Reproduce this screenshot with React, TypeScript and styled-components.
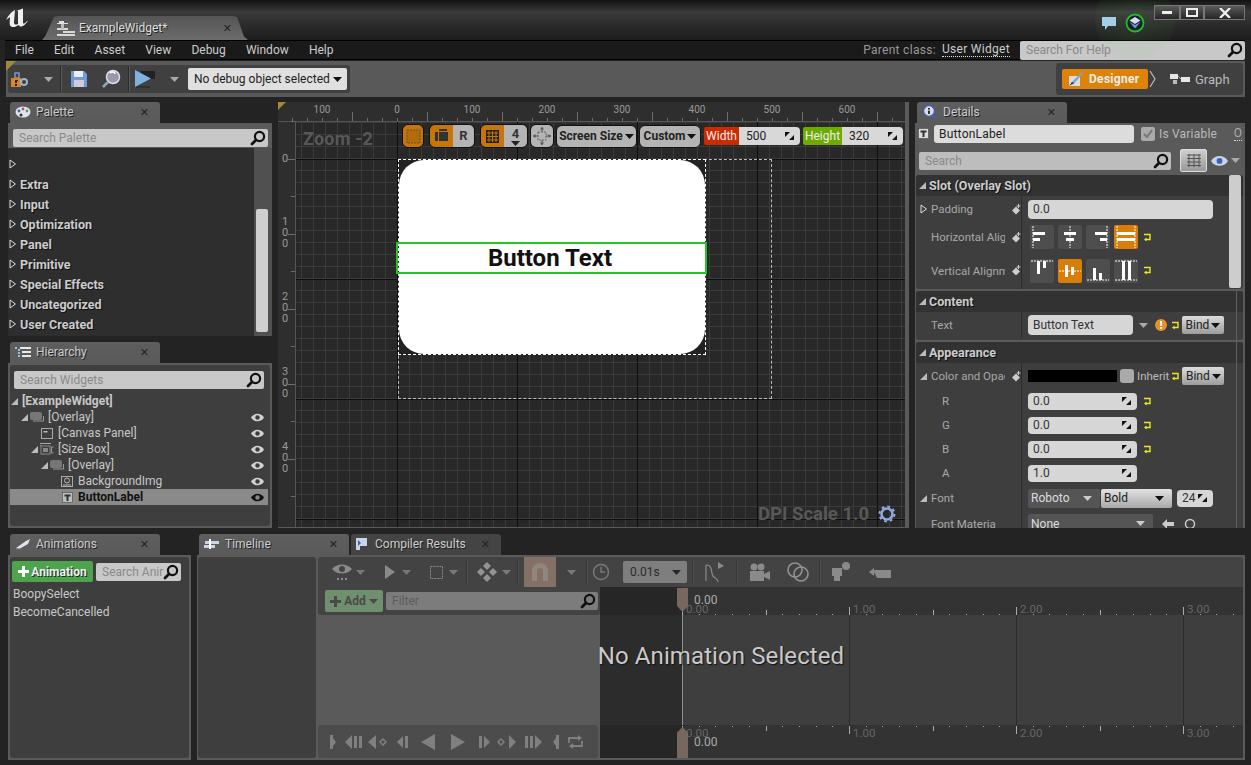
import { ReactNode } from 'react';
import styled, { createGlobalStyle } from 'styled-components';

const GlobalStyle = createGlobalStyle`
  html, body { margin: 0; padding: 0; background: #1e1e1e; }
  * { box-sizing: border-box; }
  body { font-family: Roboto, "Liberation Sans", sans-serif; }
`;

const PALETTE_ROWS = ['', 'Extra', 'Input', 'Optimization', 'Panel', 'Primitive', 'Special Effects', 'Uncategorized', 'User Created'];
const MENU_ITEMS = ['File', 'Edit', 'Asset', 'View', 'Debug', 'Window', 'Help'];
const TREE = [
  { label: '[ExampleWidget]', depth: 0, arrow: true, root: true },
  { label: '[Overlay]', depth: 1, arrow: true, icon: 'overlay' },
  { label: '[Canvas Panel]', depth: 2, icon: 'canvas' },
  { label: '[Size Box]', depth: 2, arrow: true, sizeBox: true, icon: 'size' },
  { label: '[Overlay]', depth: 3, arrow: true, icon: 'overlay' },
  { label: 'BackgroundImg', depth: 4, icon: 'image' },
  { label: 'ButtonLabel', depth: 4, icon: 'text', selected: true },
];

/* ---------- shell ---------- */

const Window = styled.div`
  width: 1251px;
  height: 765px;
  display: flex;
  flex-direction: column;
  overflow: hidden;
  background: #232323;
  color: #ccc;
  font-size: 12px;
`;

const TitleBar = styled.div`
  position: relative;
  flex: 0 0 40px;
  display: flex;
  align-items: flex-end;
  padding-left: 42px;
  background: linear-gradient(#121212 0, #1e1e1e 8%, #3a3a3a 30%, #2c2c2c 60%, #1d1d1d 100%);
`;

const Glow = styled.div`
  position: absolute;
  left: 1095px;
  top: -20px;
  width: 80px;
  height: 80px;
  border-radius: 50%;
  background: radial-gradient(rgba(90, 200, 90, 0.1), rgba(90, 200, 90, 0.04) 70%, transparent 72%);
`;

const LogoSlot = styled.div`
  position: absolute;
  left: 5px;
  top: 8px;
`;

const DocTab = styled.div`
  width: 206px;
  height: 24px;
  display: flex;
  align-items: center;
  gap: 4px;
  padding: 0 16px 0 15px;
  background: linear-gradient(#555, #6c6c6c);
  clip-path: polygon(0 100%, 3px 85%, 12px 4%, 16px 0, 190px 0, 195px 4%, 202px 85%, 100% 100%);
  color: #ddd;
  text-shadow: 1px 1px 0 #222;
`;

const DocTabTitle = styled.span`
  flex: 1;
  font-size: 12px;
`;

const CloseX = styled.span`
  font-size: 11px;
  line-height: 1;
  color: #222;
  text-shadow: none;
  font-family: "DejaVu Sans", sans-serif;
`;

const TrayIcons = styled.div`
  position: absolute;
  left: 1101px;
  top: 13px;
  display: flex;
  align-items: center;
  gap: 8px;
`;

const WindowButtons = styled.div`
  position: absolute;
  left: 1154px;
  top: 5px;
  display: flex;
`;

const WindowButton = styled.div<{ $w: number }>`
  width: ${({ $w }) => $w}px;
  height: 15px;
  display: flex;
  align-items: center;
  justify-content: center;
  border: 1px solid #777;
  background: linear-gradient(#5a5a5a, #262626);
`;

const MenuBar = styled.div`
  flex: 0 0 20px;
  min-height: 0;
  margin: 0 6px 0 5px;
  display: flex;
  align-items: center;
  background: #1a1a1a;
  border-top: 1px solid #000;
  border-bottom: 1px solid #000;
  padding-left: 10px;
`;

const MenuItem = styled.span`
  font-size: 12px;
  color: #ccc;
  margin-right: 20.2px;
`;

const ParentLabel = styled.span`
  margin-left: auto;
  color: #999;
  font-size: 12px;
  letter-spacing: 0.3px;
`;

const ParentLink = styled.span`
  margin: 0 10px 0 6px;
  color: #ccc;
  font-size: 12px;
  letter-spacing: 0.3px;
  border-bottom: 1px dotted #ddd;
  line-height: 13px;
`;

const SearchBox = styled.div<{ $w?: number; $h?: number; $shade?: string }>`
  display: flex;
  align-items: center;
  justify-content: space-between;
  flex: ${({ $w }) => ($w ? `0 0 ${$w}px` : '1')};
  height: ${({ $h }) => $h ?? 18}px;
  padding: 0 2px 0 6px;
  border-radius: 2px;
  background: ${({ $shade }) => $shade ?? '#c8c8c8'};
  color: #8a8a8a;
  font-size: 12px;
  overflow: hidden;
  white-space: nowrap;
`;

const ToolBar = styled.div`
  flex: 0 0 36px;
  margin: 1px 6px 0 6px;
  position: relative;
  display: flex;
  align-items: center;
  justify-content: space-between;
  padding: 0 2px;
  background: #595959;
`;

const CornerMark = styled.div`
  position: absolute;
  left: 0;
  top: 0;
  width: 0;
  height: 0;
  border-top: 10px solid #a08a3a;
  border-right: 10px solid transparent;
`;

const ToolPill = styled.div`
  width: 342px;
  height: 28px;
  display: flex;
  align-items: center;
  background: #404040;
  border-radius: 3px;
`;

const Slot = styled.div<{ $w: number }>`
  flex: 0 0 ${({ $w }) => $w}px;
  display: flex;
  align-items: center;
  justify-content: center;
`;

const Sep = styled.div`
  width: 2px;
  height: 26px;
  background: #2c2c2c;
  border-right: 1px solid #5a5a5a;
`;

const DebugCombo = styled.div`
  width: 159px;
  height: 22px;
  display: flex;
  align-items: center;
  gap: 3px;
  padding-left: 6px;
  border-radius: 2px;
  background: #e0e0e0;
  color: #222;
  font-size: 12px;
  white-space: nowrap;
`;

const ModePill = styled.div`
  width: 187px;
  height: 32px;
  display: flex;
  align-items: center;
  padding: 0 6px;
  background: #404040;
  border-radius: 3px;
`;

const DesignerButton = styled.div`
  width: 86px;
  height: 20px;
  display: flex;
  align-items: center;
  gap: 5px;
  padding-left: 6px;
  border-radius: 2px;
  background: #de8308;
  color: #eee;
  font-weight: 700;
  font-size: 12px;
  letter-spacing: 0.3px;
`;

const GraphLabel = styled.span`
  margin-left: 5px;
  font-size: 13px;
  color: #bbb;
`;

/* ---------- docked panels ---------- */

const MainArea = styled.div`
  flex: 0 0 426px;
  min-height: 0;
  margin: 5px 6px 0 8px;
  display: grid;
  grid-template-columns: 264px 631px 330px;
  grid-template-rows: minmax(0, 1fr);
  column-gap: 6px;
`;

const Stack = styled.div`
  display: flex;
  flex-direction: column;
  gap: 6px;
  min-height: 0;
`;

const Dock = styled.div<{ $h?: number }>`
  display: flex;
  flex-direction: column;
  flex: ${({ $h }) => ($h ? `0 0 ${$h}px` : '1')};
  min-height: 0;
  min-width: 0;
`;

const TabStrip = styled.div`
  flex: 0 0 21px;
  display: flex;
  gap: 2px;
  padding-left: 2px;
`;

const PanelTab = styled.div<{ $dim?: boolean }>`
  width: 150px;
  display: flex;
  align-items: center;
  gap: 5px;
  padding: 0 11px 1px 5px;
  border-radius: 3px 3px 0 0;
  background: ${({ $dim }) => ($dim ? '#444' : 'linear-gradient(#5e5e5e, #5a5a5a)')};
  color: #ccc;
  font-size: 12px;
  text-shadow: 1px 1px 0 #222;
`;

const TabTitle = styled.span`
  flex: 1;
  white-space: nowrap;
`;

const PanelBody = styled.div<{ $pad?: string }>`
  position: relative;
  flex: 1;
  min-height: 0;
  display: flex;
  flex-direction: column;
  background: #5a5a5a;
  padding: ${({ $pad }) => $pad ?? '3px'};
  overflow: hidden;
`;

const PaletteSearch = styled.div`
  display: flex;
  padding: 5px 3px 1px 1px;
  flex: 0 0 24px;
`;

const PaletteList = styled.div`
  flex: 1;
  display: flex;
  min-height: 0;
  background: #2e2e2e;
  margin: 0 -1px -1px -1px;
`;

const PaletteRows = styled.div`
  flex: 1;
  padding-top: 6px;
`;

const PaletteRow = styled.div`
  height: 20px;
  display: flex;
  align-items: center;
  gap: 3px;
  padding-left: 1px;
  font-size: 12.5px;
  font-weight: 700;
  color: #ccc;
  text-shadow: 1px 1px 0 #111;
`;

const PaletteScroll = styled.div`
  flex: 0 0 18px;
  display: flex;
  flex-direction: column;
  justify-content: flex-end;
  padding: 0 4px 4px 2px;
  background: #505050;
`;

const ScrollThumb = styled.div<{ $h: number }>`
  height: ${({ $h }) => $h}px;
  background: #cfcfcf;
  border-radius: 2px;
`;

const DarkPanel = styled.div`
  flex: 1;
  min-height: 0;
  display: flex;
  flex-direction: column;
  background: #3e3e3e;
  border-radius: 3px;
  padding: 3px 2px 0 0;
`;

const TreeSearch = styled.div`
  display: flex;
  padding: 3px 4px 4px 4px;
`;

const TreeRow = styled.div<{ $selected?: boolean }>`
  height: 16px;
  display: flex;
  align-items: center;
  padding-right: 4px;
  background: ${({ $selected }) => ($selected ? '#8a8a8a' : 'transparent')};
  color: ${({ $selected }) => ($selected ? '#111' : '#c8c8c8')};
  font-weight: ${({ $selected }) => ($selected ? 700 : 400)};
  font-size: 12px;
`;

const TreeIndent = styled.div<{ $depth: number }>`
  flex: 0 0 ${({ $depth }) => $depth * 10}px;
`;

const TreeArrowSlot = styled.div`
  flex: 0 0 9px;
  display: flex;
  justify-content: center;
`;

const TreeIconSlot = styled.div`
  flex: 0 0 16px;
  display: flex;
  justify-content: center;
  margin-right: 3px;
`;

const TreeLabel = styled.span<{ $root?: boolean }>`
  flex: 1;
  white-space: nowrap;
  margin-left: ${({ $root }) => ($root ? 3 : 0)}px;
  font-weight: ${({ $root }) => ($root ? 700 : 'inherit')};
`;

/* ---------- designer canvas ---------- */

const CanvasBody = styled.div`
  position: relative;
  flex: 1;
  display: grid;
  grid-template-columns: 18px 1fr;
  grid-template-rows: 20px minmax(0, 1fr);
  background: #2e2e2e;
  border-right: 4px solid #5a5a5a;
  border-bottom: 1px solid #5a5a5a;
  overflow: hidden;
`;

const CanvasCorner = styled.div`
  position: absolute;
  left: 0;
  top: 0;
  width: 0;
  height: 0;
  border-top: 8px solid #a08a3a;
  border-right: 8px solid transparent;
  z-index: 3;
`;

const RulerTop = styled.div`
  grid-column: 1 / 3;
  position: relative;
  border-bottom: 1px solid #555;
  font-size: 10px;
  color: #999;
`;

const RulerLeft = styled.div`
  position: relative;
  border-right: 1px solid #555;
  color: #999;
  font-size: 11px;
`;

const RulerLabel = styled.span`
  position: absolute;
  top: 2px;
  transform: translateX(-50%);
`;

const RulerDigits = styled.span`
  position: absolute;
  left: 3px;
  width: 8px;
  display: flex;
  flex-direction: column;
  align-items: center;
  line-height: 11px;
`;

const Tick = styled.i<{ $len: number; $axis: 'x' | 'y'; $tone?: string }>`
  position: absolute;
  background: ${({ $tone }) => $tone ?? '#6e6e6e'};
  ${({ $axis, $len }) =>
    $axis === 'x'
      ? `bottom: 0; width: 1px; height: ${$len}px;`
      : `right: 0; height: 1px; width: ${$len}px;`}
`;

const Stage = styled.div`
  position: relative;
  overflow: hidden;
  background-color: #282828;
  background-image:
    linear-gradient(to right, #0e0e0e 1px, transparent 1px),
    linear-gradient(to bottom, #0e0e0e 1px, transparent 1px),
    linear-gradient(to right, #3b3b3b 1px, transparent 1px),
    linear-gradient(to bottom, #3b3b3b 1px, transparent 1px);
  background-size: 120px 120px, 120px 120px, 12px 12px, 12px 12px;
  background-position: 101px 0, 0 37px, 5px 0, 0 0;
`;

const ZoomCaption = styled.div`
  position: absolute;
  left: 7px;
  top: 6px;
  font-size: 18px;
  font-weight: 700;
  color: #585858;
  letter-spacing: 0.2px;
`;

const DpiCaption = styled.div`
  position: absolute;
  right: 9px;
  bottom: 2px;
  display: flex;
  align-items: center;
  gap: 9px;
  font-size: 18.5px;
  font-weight: 700;
  color: #585858;
`;

const DesignBounds = styled.div`
  position: absolute;
  left: 102px;
  top: 37px;
  width: 374px;
  height: 240px;
  border: 1px dashed #bdbdbd;
`;

const WidgetOutline = styled.div`
  position: absolute;
  left: 102px;
  top: 37px;
  width: 308px;
  height: 196px;
  border: 1.5px dashed #fff;
  background: #222;
`;

const WidgetFill = styled.div`
  width: 100%;
  height: 100%;
  background: #fff;
  border-radius: 25px;
`;

const LabelBox = styled.div`
  position: absolute;
  left: 100px;
  top: 120px;
  width: 311px;
  height: 32px;
  display: flex;
  align-items: center;
  justify-content: center;
  padding-right: 3px;
  border: 2px solid #22c822;
  color: #111;
  font-size: 24px;
  font-weight: 700;
`;

const CanvasTools = styled.div`
  position: absolute;
  left: 106px;
  top: 2px;
  display: flex;
  align-items: center;
  gap: 2px;
`;

const ToolGroup = styled.div<{ $gapRight?: number }>`
  height: 24px;
  display: flex;
  margin-right: ${({ $gapRight }) => $gapRight ?? 0}px;
  border: 1px solid #111;
  border-radius: 6px;
  overflow: hidden;
`;

const ToolCell = styled.div<{ $w: number; $on?: boolean }>`
  width: ${({ $w }) => $w}px;
  display: flex;
  flex-direction: column;
  align-items: center;
  justify-content: center;
  background: ${({ $on }) => ($on ? '#c67508' : '#b4b4b4')};
  color: #333;
  font-weight: 700;
  font-size: 13px;
  line-height: 14px;
`;

const ToolCombo = styled.div<{ $w: number }>`
  width: ${({ $w }) => $w}px;
  height: 23px;
  display: flex;
  align-items: center;
  justify-content: center;
  gap: 2px;
  border: 1px solid #111;
  border-radius: 6px;
  background: #b4b4b4;
  color: #222;
  font-weight: 700;
  font-size: 12px;
  white-space: nowrap;
`;

const SizeField = styled.div`
  height: 18px;
  display: flex;
  margin-left: 1px;
`;

const SizeTag = styled.div<{ $tone: string; $w: number }>`
  width: ${({ $w }) => $w}px;
  display: flex;
  align-items: center;
  justify-content: center;
  background: ${({ $tone }) => $tone};
  border-radius: 2px 0 0 2px;
  color: #eee;
  font-size: 12px;
`;

const SizeValue = styled.div<{ $w: number }>`
  width: ${({ $w }) => $w}px;
  display: flex;
  align-items: center;
  justify-content: space-between;
  padding: 0 5px 0 7px;
  background: #d8d8d8;
  border-radius: 0 4px 4px 0;
  color: #222;
  font-size: 12px;
`;

/* ---------- details ---------- */

const NameRow = styled.div`
  flex: 0 0 24px;
  display: flex;
  align-items: center;
  padding: 0 3px 3px 3px;
`;

const NameField = styled.div`
  width: 200px;
  height: 18px;
  margin-left: 5px;
  display: flex;
  align-items: center;
  padding-left: 5px;
  background: #dcdcdc;
  border-radius: 3px;
  color: #222;
  font-size: 12px;
  letter-spacing: 0.2px;
`;

const VarCheck = styled.div`
  width: 14px;
  height: 14px;
  margin-left: 7px;
  display: flex;
  align-items: center;
  justify-content: center;
  background: #aaa;
  border-radius: 2px;
`;

const VarLabel = styled.span`
  margin-left: 4px;
  color: #bbb;
  font-size: 12px;
  letter-spacing: 0.2px;
  white-space: nowrap;
`;

const DottedO = styled.span`
  margin-left: auto;
  color: #aaa;
  font-size: 12px;
  line-height: 13px;
  border-bottom: 1px dotted #ddd;
`;

const DetailsSearchRow = styled.div`
  flex: 0 0 28px;
  display: flex;
  align-items: center;
  padding: 0 0 1px 4px;
`;

const ViewToggle = styled.div`
  width: 27px;
  height: 23px;
  margin-left: 9px;
  display: flex;
  align-items: center;
  justify-content: center;
  background: linear-gradient(#cfcfcf, #999);
  border: 1px solid #ddd;
  border-radius: 2px;
`;

const DetailsScroll = styled.div`
  position: relative;
  flex: 1;
  min-height: 0;
  overflow: hidden;
  padding-left: 1px;
  margin-right: 2px;
`;

const DetailsTrack = styled.div`
  position: absolute;
  right: 6px;
  top: 116px;
  bottom: 0;
  width: 1px;
  background: #5f5f5f;
`;

const DetailsThumb = styled.div`
  position: absolute;
  right: 2px;
  top: 0;
  width: 12px;
  height: 113px;
  background: #cdcdcd;
  border-radius: 2px;
`;

const Category = styled.div`
  margin-bottom: 2px;
  background: #3e3e3e;
  border-radius: 3px;
`;

const CategoryHead = styled.div`
  height: 21px;
  display: flex;
  align-items: center;
  gap: 2px;
  padding-left: 2px;
  background: #323232;
  border-radius: 3px 3px 0 0;
  font-weight: 700;
  font-size: 12.5px;
  color: #ccc;
  text-shadow: 1px 1px 0 #111;
`;

const PropRow = styled.div<{ $h: number; $lift?: number }>`
  height: ${({ $h }) => $h}px;
  padding-bottom: ${({ $lift }) => $lift ?? 0}px;
  display: grid;
  grid-template-columns: 106px 1fr;
`;

const PropName = styled.div`
  display: flex;
  align-items: center;
  border-right: 1px solid #2c2c2c;
  color: #a8a8a8;
  font-size: 11.5px;
`;

const PropArrow = styled.div`
  flex: 0 0 15px;
  display: flex;
  justify-content: center;
`;

const PropText = styled.span<{ $indent?: number }>`
  flex: 0 0 74px;
  padding-left: ${({ $indent }) => $indent ?? 0}px;
  overflow: hidden;
  white-space: nowrap;
`;

const OverrideSlot = styled.div`
  margin-left: 6px;
`;

const PropValue = styled.div`
  display: flex;
  align-items: center;
  padding-left: 6px;
`;

const ValueField = styled.div<{ $w: number; $h?: number }>`
  width: ${({ $w }) => $w}px;
  height: ${({ $h }) => $h ?? 18}px;
  display: flex;
  align-items: center;
  justify-content: space-between;
  padding: 0 5px;
  background: #d6d6d6;
  border-radius: 4px;
  color: #333;
  font-size: 12px;
`;

const AlignRow = styled.div`
  display: flex;
  gap: 4px;
  margin: 0 5px 0 2px;
`;

const AlignCell = styled.div<{ $on?: boolean }>`
  width: 24px;
  height: 24px;
  background: ${({ $on }) => ($on ? '#d77d08' : '#4e4e4e')};
  border-radius: 2px;
  display: flex;
`;

const BindButton = styled.div`
  width: 42px;
  height: 18px;
  margin-left: 2px;
  display: flex;
  align-items: center;
  justify-content: center;
  gap: 2px;
  background: linear-gradient(#dcdcdc, #9c9c9c);
  border-radius: 2px;
  color: #222;
  font-size: 12px;
`;

const Swatch = styled.div<{ $tone: string; $w: number; $h: number }>`
  width: ${({ $w }) => $w}px;
  height: ${({ $h }) => $h}px;
  margin-right: 3px;
  background: ${({ $tone }) => $tone};
  border-radius: ${({ $w }) => ($w < 20 ? 3 : 0)}px;
`;

const InheritText = styled.span`
  flex: 0 0 32px;
  color: #bbb;
  font-size: 11.5px;
`;

const FontDrop = styled.div<{ $w: number; $light?: boolean }>`
  width: ${({ $w }) => $w}px;
  height: 19px;
  display: flex;
  align-items: center;
  justify-content: space-between;
  padding: 0 8px 0 3px;
  margin-right: 1px;
  background: ${({ $light }) => ($light ? 'linear-gradient(#e2e2e2, #a8a8a8)' : '#555')};
  border-radius: 2px;
  color: ${({ $light }) => ($light ? '#222' : '#ddd')};
  font-size: 12px;
`;

/* ---------- bottom ---------- */

const BottomArea = styled.div`
  flex: 0 0 226px;
  margin: 6px 6px 5px 8px;
  display: grid;
  grid-template-columns: 183px 1048px;
  grid-template-rows: minmax(0, 1fr);
  column-gap: 6px;
  min-height: 0;
`;

const AnimationsTop = styled.div`
  display: flex;
  align-items: center;
  gap: 3px;
  margin-top: 1px;
  padding: 0 6px 0 2px;
  height: 21px;
`;

const AddAnimation = styled.div`
  flex: 0 0 81px;
  height: 21px;
  display: flex;
  align-items: center;
  justify-content: center;
  gap: 2px;
  background: #4ca44c;
  border-radius: 2px;
  color: #eee;
  font-weight: 700;
  font-size: 12px;
  text-shadow: 1px 1px 0 #222;
`;

const AnimationRows = styled.div`
  padding: 3px 0 0 3px;
`;

const AnimationRow = styled.div`
  height: 18px;
  display: flex;
  align-items: center;
  color: #c8c8c8;
  font-size: 12px;
`;

const TimelineBody = styled.div`
  position: relative;
  flex: 1;
  min-height: 0;
  display: grid;
  grid-template-columns: 118px 1fr;
  column-gap: 2px;
  background: #5a5a5a;
  padding: 2px 2px 2px 1px;
`;

const LeftStub = styled.div`
  background: #3e3e3e;
  border-radius: 3px;
`;

const TimelineGrid = styled.div`
  display: grid;
  grid-template-columns: 282px 1fr;
  grid-template-rows: 30px 28px 110px 1fr;
  min-height: 0;
`;

const TimelineTools = styled.div`
  grid-column: 1 / 3;
  display: flex;
  align-items: center;
  padding-left: 12px;
  background: #434343;
  border-radius: 3px 3px 0 0;
  > * { opacity: 0.52; }
`;

const SnapBox = styled.div`
  width: 32px;
  height: 30px;
  display: flex;
  align-items: center;
  justify-content: center;
  background: #c29a84;
`;

const StepCombo = styled.div`
  width: 64px;
  height: 22px;
  display: flex;
  align-items: center;
  justify-content: space-between;
  padding: 0 6px 0 7px;
  background: #b4b4b4;
  border-radius: 2px;
  color: #111;
  font-size: 12px;
`;

const OutlinerHead = styled.div`
  display: flex;
  align-items: center;
  gap: 3px;
  padding: 0 2px 0 7px;
  background: #434343;
  border-radius: 0 0 3px 3px;
`;

const AddTrack = styled.div`
  flex: 0 0 58px;
  height: 22px;
  display: flex;
  align-items: center;
  justify-content: center;
  gap: 3px;
  background: #6f8f6f;
  border-radius: 2px;
  color: #4a4a4a;
  font-weight: 700;
  font-size: 12px;
`;

const FilterHint = styled.span`
  color: #5c5c5c;
`;

const OutlinerGap = styled.div``;

const Transport = styled.div`
  display: flex;
  align-items: center;
  padding-left: 2px;
  margin-right: 2px;
  background: #4c4c4c;
  border-radius: 3px;
`;

const TransportItem = styled.div<{ $gap: number }>`
  margin-left: ${({ $gap }) => $gap}px;
`;

const Track = styled.div<{ $band: string; $shade: string }>`
  position: relative;
  overflow: hidden;
  background: linear-gradient(to right, ${({ $shade }) => $shade} 82px, ${({ $band }) => $band} 82px);
`;

const TrackTime = styled.span<{ $top?: number; $bottom?: number; $bright?: boolean; $size?: number }>`
  position: absolute;
  ${({ $top }) => ($top !== undefined ? `top: ${$top}px;` : '')}
  ${({ $bottom }) => ($bottom !== undefined ? `bottom: ${$bottom}px;` : '')}
  color: ${({ $bright }) => ($bright ? '#aaa' : '#666')};
  font-size: ${({ $size }) => $size ?? 11.5}px;
`;

const PlayheadCap = styled.div<{ $tip: 'up' | 'down'; $h: number }>`
  position: absolute;
  left: 77px;
  width: 11px;
  height: ${({ $h }) => $h}px;
  top: ${({ $tip }) => ($tip === 'down' ? '1px' : '2px')};
  background: #77675e;
  clip-path: ${({ $tip }) =>
    $tip === 'down'
      ? 'polygon(0 0, 100% 0, 100% 75%, 50% 100%, 0 75%)'
      : 'polygon(50% 0, 100% 18%, 100% 100%, 0 100%, 0 18%)'};
`;

const PlayheadLine = styled.div`
  position: absolute;
  left: 82px;
  top: 0;
  bottom: 0;
  width: 1px;
  background: #8f8f8f;
`;

const NoSelection = styled.div`
  position: absolute;
  inset: 0 0 3px 0;
  display: flex;
  align-items: center;
  justify-content: center;
  font-size: 24px;
  letter-spacing: 0.1px;
  color: #c9c9c9;
  text-shadow: 1px 1px 1px #111;
  pointer-events: none;
`;

/* ---------- drawings ---------- */

const Icon = ({ w, h = w, box, children }: { w: number; h?: number; box?: string; children: ReactNode }) => (
  <svg width={w} height={h} viewBox={box ?? `0 0 ${w} ${h}`} style={{ display: 'block', flex: 'none' }}>
    {children}
  </svg>
);

const Caret = ({ tone = '#aaa' }: { tone?: string }) => (
  <Icon w={9} h={5}>
    <path d="M0 0h9L4.5 5z" fill={tone} />
  </Icon>
);

const OutlineArrow = () => (
  <Icon w={8} h={10}>
    <path d="M1 1l5.5 4L1 9z" fill="none" stroke="#ddd" strokeWidth="1" />
  </Icon>
);

const SolidArrow = ({ tone = '#bbb' }: { tone?: string }) => (
  <Icon w={9} h={9}>
    <path d="M8 1v7H1z" fill={tone} />
  </Icon>
);

const Magnifier = () => (
  <Icon w={16}>
    <circle cx="9.5" cy="6.5" r="4.6" fill="none" stroke="#111" strokeWidth="2.2" />
    <path d="M6 10L2 14" stroke="#111" strokeWidth="2.8" strokeLinecap="round" />
  </Icon>
);

const Spinner = () => (
  <Icon w={11} h={10}>
    <path d="M1 1h5L1 6zM10 9H5l5-5z" fill="#111" />
  </Icon>
);

const ResetArrow = () => (
  <Icon w={9} h={9}>
    <path d="M1 1.5h6v5H2.5" fill="none" stroke="#eaea20" strokeWidth="1.4" />
    <path d="M3.5 4.5v4L1 6.5z" fill="#eaea20" />
  </Icon>
);

const Override = () => (
  <OverrideSlot>
    <Icon w={11} h={11}>
      <path d="M5 2.5L9 6.5 5 10.500 1 6.500z" fill="#ccc" />
      <path d="M7.500 0v4M5.500 2h4" stroke="#ccc" strokeWidth="1" />
    </Icon>
  </OverrideSlot>
);

const Eye = ({ tone = '#d2d2d2', pupil = '#3e3e3e', w = 13 }: { tone?: string; pupil?: string; w?: number }) => (
  <Icon w={w} h={(w * 9) / 13} box="0 0 13 9">
    <path d="M0 4.500C3 -0.500 10 -0.500 13 4.500 10 9.500 3 9.500 0 4.500z" fill={tone} />
    <circle cx="6.500" cy="4.500" r="2.200" fill={pupil} />
  </Icon>
);

const UeLogo = () => (
  <Icon w={24} h={20}>
    <path
      d="M1 12C3 8 6 4 10 2L9 14C9 17 11 17 13 16L13 4C13 3 12 2.500 11 3L18 .5 18 14C18 16 19 16 21 14L23 12.500C21 16 18 19 15 18.500L13.500 17C11 19 7 20 5.500 18 4 16 5 12 5 9 4 10 2 11 1 12z"
      fill="#efefef"
    />
  </Icon>
);

const BlueprintIcon = () => (
  <Icon w={18} h={16}>
    <path d="M2 1h5v3H2zM0 3h11v1H0z" fill="#e2e2e2" />
    <path d="M0 8h11v2H0zM6 11h12v2H6zM0 14h18v2H0z" fill="#d8d8d8" />
    <path d="M4 4h3v5H4z" fill="#bbb" />
  </Icon>
);

const PaletteIcon = () => (
  <Icon w={16} h={12}>
    <ellipse cx="8" cy="6" rx="7.500" ry="5.500" fill="#dfe4ec" />
    <circle cx="4" cy="5" r="1.400" fill="#3a62b8" />
    <circle cx="8" cy="3" r="1.400" fill="#d04a3a" />
    <circle cx="12" cy="5" r="1.400" fill="#4aa84a" />
    <circle cx="6" cy="9" r="1.500" fill="#333" />
  </Icon>
);

const HierarchyIcon = () => (
  <Icon w={16} h={13}>
    <path d="M0 1h2v2H0zM3 3h2v2H3zM3 6h2v2H3zM3 9h2v2H3z" fill="#8fc0e8" />
    <path d="M5 1h11v2H5zM7 5h9v2H7zM7 9h9v2H7z" fill="#e8e8e8" />
  </Icon>
);

const DetailsIcon = () => (
  <Icon w={16} h={16}>
    <circle cx="7" cy="7" r="5.500" fill="#ddd" stroke="#3a62b8" strokeWidth="1.500" />
    <path d="M6 4h2v1.500H6zM6 6.500h2V10H6z" fill="#333" />
    <path d="M11 11l4 4" stroke="#3a62b8" strokeWidth="1.500" />
  </Icon>
);

const TextBadge = ({ fill = '#dcdcdc' }: { fill?: string }) => (
  <Icon w={11} h={11}>
    <rect x=".5" y=".5" width="10" height="10" fill={fill} stroke="#333" strokeWidth="0.500" />
    <path d="M2.500 2.500h6v2H6.500v4.500h-2V4.500H2.500z" fill="#333" />
  </Icon>
);

const OverlayGlyph = () => (
  <Icon w={14} h={10}>
    <path d="M13.500 4v5H3" fill="none" stroke="#999" />
    <rect x="0" y="0" width="12" height="8" rx="2" fill="#777" />
  </Icon>
);

const CanvasGlyph = () => (
  <Icon w={12} h={11}>
    <rect x=".5" y=".5" width="11" height="10" fill="none" stroke="#aaa" />
    <path d="M2.500 3h4v1.500h-4z" fill="#bbb" />
  </Icon>
);

const SizeGlyph = () => (
  <Icon w={14} h={12}>
    <path d="M0 .5h11M0 2.500h1" stroke="#aaa" />
    <rect x="1" y="3" width="9" height="8" fill="none" stroke="#888" />
    <rect x="3" y="5" width="5" height="4" fill="#888" />
    <path d="M11.500 4h2M11.500 4v6h2" fill="none" stroke="#999" />
  </Icon>
);

const ImageGlyph = () => (
  <Icon w={12} h={11}>
    <rect x=".5" y=".5" width="11" height="10" fill="none" stroke="#aaa" />
    <circle cx="6" cy="4.500" r="2.500" fill="none" stroke="#bbb" />
    <path d="M2 9h8" stroke="#bbb" />
  </Icon>
);

const TREE_GLYPHS: Record<string, ReactNode> = {
  overlay: <OverlayGlyph />,
  canvas: <CanvasGlyph />,
  size: <SizeGlyph />,
  image: <ImageGlyph />,
  text: <TextBadge fill="#bdbdbd" />,
};

type Bars = { dash: string[]; bars: [number, number, number, number][] };
const ALIGNS: Bars[] = [
  { dash: ['M3 1v22'], bars: [[3, 7, 12, 3], [3, 13, 7, 3]] },
  { dash: ['M12 1v22'], bars: [[6, 7, 12, 3], [8, 13, 8, 3]] },
  { dash: ['M21 1v22'], bars: [[9, 7, 12, 3], [14, 13, 7, 3]] },
  { dash: ['M3 1v22', 'M21 1v22'], bars: [[3, 7, 18, 3], [3, 13, 18, 3]] },
  { dash: ['M1 2h22'], bars: [[7, 2, 3, 13], [13, 2, 3, 7]] },
  { dash: ['M1 12h22'], bars: [[7, 6, 3, 12], [13, 8, 3, 8]] },
  { dash: ['M1 21h22'], bars: [[7, 9, 3, 12], [13, 14, 3, 7]] },
  { dash: ['M1 2h22', 'M1 21h22'], bars: [[8, 2, 3, 19], [14, 2, 3, 19]] },
];

const AlignGlyph = ({ index }: { index: number }) => (
  <Icon w={24}>
    {ALIGNS[index].dash.map((d) => (
      <path key={d} d={d} stroke="#fff" strokeDasharray="2 1" />
    ))}
    {ALIGNS[index].bars.map(([x, y, w, h]) => (
      <rect key={`${x}-${y}`} x={x} y={y} width={w} height={h} fill="#fff" />
    ))}
  </Icon>
);

const TRANSPORT = [
  { w: 6, gap: 10, d: 'M0 2h3v3l3 4-3 4v3H0z' },
  { w: 19, gap: 9, d: 'M7 2v14L0 9zM9 3h3v12H9zM14 3h3v12h-3z' },
  { w: 21, gap: 4, d: 'M8 2v14L0 9zM15 5l4 4-4 4-4-4zM15 7l-2 2 2 2 2-2z' },
  { w: 13, gap: 7, d: 'M7 3v12L1 9zM9 3h3v12H9z' },
  { w: 16, gap: 11, d: 'M15 1v16L1 9z' },
  { w: 16, gap: 14, d: 'M1 1l14 8-14 8z' },
  { w: 13, gap: 12, d: 'M1 3h3v12H1zM6 3l6 6-6 6z' },
  { w: 20, gap: 6, d: 'M4 5l4 4-4 4-4-4zM4 7l-2 2 2 2 2-2zM12 2l7 7-7 7z' },
  { w: 19, gap: 6, d: 'M2 3h3v12H2zM7 3h3v12H7zM12 2l7 7-7 7z' },
  { w: 6, gap: 11, d: 'M6 2H3v3L0 9l3 4v3h3z' },
];

const PathGlyph = () => (
  <Icon w={24} h={24}>
    <path d="M5 5v16M5 5c8 0 4 10 8 12 3 2 4 3 4 5" fill="none" stroke="#ccc" strokeWidth="1.200" />
    <path d="M17 2l6 4-6 3z" fill="#ccc" />
  </Icon>
);

const App = () => (
  <Window>
    <GlobalStyle />

    <TitleBar>
      <Glow />
      <LogoSlot><UeLogo /></LogoSlot>
      <DocTab>
        <BlueprintIcon />
        <DocTabTitle>ExampleWidget*</DocTabTitle>
        <CloseX>✕</CloseX>
      </DocTab>
      <TrayIcons>
        <Icon w={16} h={14}>
          <path d="M1 1h14v9H7l-3 4v-4H1z" fill="#a5cfe6" />
        </Icon>
        <Icon w={20}>
          <circle cx="10" cy="10" r="8.500" fill="#123" stroke="#28b828" strokeWidth="1.800" />
          <path d="M10 4l5.500 3.500-5.500 3.500-5.500-3.500z" fill="#dde" />
          <path d="M4.500 9l5.500 6.500 5.500-6.500-5.500 3z" fill="#7a9abb" />
        </Icon>
      </TrayIcons>
      <WindowButtons>
        <WindowButton $w={26}><Icon w={10} h={3}><rect width="10" height="3" fill="#eee" /></Icon></WindowButton>
        <WindowButton $w={24}>
          <Icon w={12} h={9}><rect x="1" y="1" width="10" height="7" fill="none" stroke="#eee" strokeWidth="2" /></Icon>
        </WindowButton>
        <WindowButton $w={41}>
          <Icon w={12} h={10}><path d="M1 0l10 10M11 0L1 10" stroke="#eee" strokeWidth="2.400" /></Icon>
        </WindowButton>
      </WindowButtons>
    </TitleBar>

    <MenuBar>
      {MENU_ITEMS.map((m) => <MenuItem key={m}>{m}</MenuItem>)}
      <ParentLabel>Parent class:</ParentLabel>
      <ParentLink>User Widget</ParentLink>
      <SearchBox $w={225} $h={19}>Search For Help<Magnifier /></SearchBox>
    </MenuBar>

    <ToolBar>
      <CornerMark />
      <ToolPill>
        <Slot $w={22}>
          <Icon w={18} h={18}>
            <path d="M5 3h4v5H5z" fill="none" stroke="#7d98b8" strokeWidth="1.500" />
            <path d="M1 8h10v9H1z" fill="#d9862a" />
            <path d="M5 10h3v1H7v2H5zM5 14h2v2H5z" fill="#222" />
            <circle cx="14" cy="12" r="3" fill="none" stroke="#9fb3c8" strokeWidth="2" />
          </Icon>
        </Slot>
        <Slot $w={8} />
        <Slot $w={20}><Caret /></Slot>
        <Slot $w={6}><Sep /></Slot>
        <Slot $w={2} />
        <Slot $w={26}>
          <Icon w={16} h={16}>
            <path d="M0 0h13l3 3v13H0z" fill="#6f9bd8" />
            <path d="M3 0h9v6H3z" fill="#eef" />
            <path d="M3 9h10v7H3z" fill="#ccd" />
          </Icon>
        </Slot>
        <Slot $w={4} />
        <Slot $w={30}>
          <Icon w={20} h={20}>
            <circle cx="12" cy="8" r="6.500" fill="#99a" stroke="#dde" strokeWidth="1.500" />
            <path d="M9 4c2-2 5-1 5 1" fill="none" stroke="#fff" strokeWidth="1.500" />
            <path d="M7 13l-5 5" stroke="#8ab" strokeWidth="2.500" />
          </Icon>
        </Slot>
        <Slot $w={6}><Sep /></Slot>
        <Slot $w={26}>
          <Icon w={22} h={20}>
            <path d="M2 18h14" stroke="#222" strokeWidth="1" />
            <path d="M6 2h15v8H12z" fill="#222" />
            <path d="M1 1l16 8.500L1 18z" fill="#7fb2e0" />
          </Icon>
        </Slot>
        <Slot $w={4} />
        <Slot $w={24}><Caret /></Slot>
        <Slot $w={2} />
        <DebugCombo>No debug object selected<Caret tone="#111" /></DebugCombo>
      </ToolPill>

      <ModePill>
        <DesignerButton>
          <Icon w={16} h={16}>
            <path d="M1 5h11v10H1z" fill="#ddd" />
            <path d="M3 12L14 1l1 1L5 14z" fill="#7fa3d8" />
            <path d="M1 15l3-4 2 1z" fill="#333" />
          </Icon>
          Designer
        </DesignerButton>
        <Icon w={10} h={20}>
          <path d="M2 2l5 8-5 8" fill="none" stroke="#bbb" strokeWidth="1.200" />
        </Icon>
        <Slot $w={12} />
        <Icon w={20} h={12}>
          <path d="M0 1h8v5H0zM11 4h9v5h-9z" fill="#e5e5e5" />
          <path d="M3 7h4v4H3z" fill="#bbb" />
          <path d="M8 3l3 3" stroke="#aaa" />
        </Icon>
        <GraphLabel>Graph</GraphLabel>
      </ModePill>
    </ToolBar>

    <MainArea>
      <Stack>
        <Dock $h={234}>
          <TabStrip>
            <PanelTab><PaletteIcon /><TabTitle>Palette</TabTitle><CloseX>✕</CloseX></PanelTab>
          </TabStrip>
          <PanelBody $pad="1px">
            <PaletteSearch>
              <Slot $w={3} />
              <SearchBox $h={18}>Search Palette<Magnifier /></SearchBox>
            </PaletteSearch>
            <PaletteList>
              <PaletteRows>
                {PALETTE_ROWS.map((r) => (
                  <PaletteRow key={r}><OutlineArrow />{r}</PaletteRow>
                ))}
              </PaletteRows>
              <PaletteScroll><ScrollThumb $h={123} /></PaletteScroll>
            </PaletteList>
          </PanelBody>
        </Dock>
        <Dock>
          <TabStrip>
            <PanelTab><HierarchyIcon /><TabTitle>Hierarchy</TabTitle><CloseX>✕</CloseX></PanelTab>
          </TabStrip>
          <PanelBody $pad="2px">
            <DarkPanel>
              <TreeSearch><SearchBox $h={18}>Search Widgets<Magnifier /></SearchBox></TreeSearch>
              {TREE.map((n, i) => (
                <TreeRow key={i} $selected={n.selected}>
                  <TreeIndent $depth={n.depth} />
                  <TreeArrowSlot>{n.arrow && <SolidArrow />}</TreeArrowSlot>
                  {n.icon && <TreeIconSlot>{TREE_GLYPHS[n.icon]}</TreeIconSlot>}
                  <TreeLabel $root={n.root}>{n.label}</TreeLabel>
                  {!n.root && (n.selected ? <Eye tone="#111" pupil="#888" /> : <Eye />)}
                </TreeRow>
              ))}
            </DarkPanel>
          </PanelBody>
        </Dock>
      </Stack>

      <CanvasBody>
        <CanvasCorner />
        <RulerTop>
          {[-100, 0, 100, 200, 300, 400, 500, 600].map((v) => (
            <RulerLabel key={v} style={{ left: 119 + v * 0.75 }}>{Math.abs(v)}</RulerLabel>
          ))}
          {Array.from({ length: 43 }, (_, i) => (
            <Tick key={i} $axis="x" $len={i % 5 === 4 ? 9 : 3} style={{ left: 14 + i * 15 }} />
          ))}
        </RulerTop>
        <RulerLeft>
          <RulerDigits style={{ top: 31 }}>0</RulerDigits>
          {[100, 200, 300, 400].map((v) => (
            <RulerDigits key={v} style={{ top: 19 + v * 0.75 }}>
              {String(v).split('').map((c, i) => <span key={i}>{c}</span>)}
            </RulerDigits>
          ))}
          {Array.from({ length: 6 }, (_, i) => (
            <Tick key={i} $axis="y" $len={7} style={{ top: 37 + i * 75 }} />
          ))}
          {Array.from({ length: 6 }, (_, i) => (
            <Tick key={i} $axis="y" $len={4} style={{ top: -1 + i * 75 }} />
          ))}
        </RulerLeft>
        <Stage>
          <ZoomCaption>Zoom -2</ZoomCaption>
          <DesignBounds />
          <WidgetOutline><WidgetFill /></WidgetOutline>
          <LabelBox>Button Text</LabelBox>
          <CanvasTools>
            <ToolGroup $gapRight={3}>
              <ToolCell $w={20} $on>
                <Icon w={15}>
                  <rect x="1" y="1" width="13" height="13" fill="#b56c08" stroke="#555" strokeDasharray="2 1" />
                </Icon>
              </ToolCell>
            </ToolGroup>
            <ToolGroup $gapRight={3}>
              <ToolCell $w={23} $on>
                <Icon w={13} h={14}>
                  <path d="M0 3h3v9H0zM4 3h9v9H4zM4 0h8v2H4z" fill="#333" />
                </Icon>
              </ToolCell>
              <ToolCell $w={21}>R</ToolCell>
            </ToolGroup>
            <ToolGroup>
              <ToolCell $w={23} $on>
                <Icon w={13}>
                  <path d="M0 0h13v13H0z" fill="#222" />
                  <path d="M1 3h11M1 6.500h11M1 10h11M3 1v11M6.500 1v11M10 1v11" stroke="#c67508" strokeWidth="1" />
                </Icon>
              </ToolCell>
              <ToolCell $w={23}>4<Caret tone="#222" /></ToolCell>
            </ToolGroup>
            <ToolGroup>
              <ToolCell $w={22}>
                <Icon w={18}>
                  <rect x="5" y="5" width="8" height="8" fill="none" stroke="#666" strokeDasharray="2 1" />
                  <path d="M9 0v5M9 13v5M0 9h5M13 9h5" stroke="#555" />
                  <path d="M9 0l2 2.500H7zM9 18l2-2.500H7zM0 9l2.500 2V7zM18 9l-2.500 2V7z" fill="#555" />
                </Icon>
              </ToolCell>
            </ToolGroup>
            <ToolCombo $w={81}>Screen Size<Caret tone="#111" /></ToolCombo>
            <ToolCombo $w={62}>Custom<Caret tone="#111" /></ToolCombo>
            <SizeField>
              <SizeTag $tone="#cc2a00" $w={35}>Width</SizeTag>
              <SizeValue $w={61}>500<Spinner /></SizeValue>
            </SizeField>
            <SizeField>
              <SizeTag $tone="#6cab00" $w={39}>Height</SizeTag>
              <SizeValue $w={61}>320<Spinner /></SizeValue>
            </SizeField>
          </CanvasTools>
          <DpiCaption>
            DPI Scale 1.0
            <Icon w={18}>
              <circle cx="9" cy="9" r="5.500" fill="none" stroke="#8ea8de" strokeWidth="2.600" />
              <circle cx="9" cy="9" r="7.500" fill="none" stroke="#8ea8de" strokeWidth="2" strokeDasharray="2.800 3.100" />
            </Icon>
          </DpiCaption>
        </Stage>
      </CanvasBody>

      <Dock>
        <TabStrip>
          <PanelTab><DetailsIcon /><TabTitle>Details</TabTitle><CloseX>✕</CloseX></PanelTab>
        </TabStrip>
        <PanelBody $pad="0">
          <NameRow>
            <TextBadge />
            <NameField>ButtonLabel</NameField>
            <VarCheck>
              <Icon w={10} h={10}><path d="M1 5l3 3 5-7" fill="none" stroke="#777" strokeWidth="2" /></Icon>
            </VarCheck>
            <VarLabel>Is Variable</VarLabel>
            <DottedO>O</DottedO>
          </NameRow>
          <DetailsSearchRow>
            <SearchBox $w={252} $h={18} $shade="#bdbdbd">Search<Magnifier /></SearchBox>
            <ViewToggle>
              <Icon w={14} h={14}>
                <path d="M0 1h14M0 4.500h14M0 8h14M0 11.500h14M2 0v13M7 0v13M12 0v13" stroke="#555" strokeWidth="1" />
              </Icon>
            </ViewToggle>
            <Slot $w={4} />
            <Eye tone="#c8d4e8" pupil="#3a62b8" w={17} />
            <Slot $w={3} />
            <Caret />
          </DetailsSearchRow>
          <DetailsScroll>
            <Category>
              <CategoryHead><SolidArrow />Slot (Overlay Slot)</CategoryHead>
              <PropRow $h={26}>
                <PropName>
                  <PropArrow><OutlineArrow /></PropArrow>
                  <PropText>Padding</PropText>
                  <Override />
                </PropName>
                <PropValue><ValueField $w={185} $h={19}>0.0</ValueField></PropValue>
              </PropRow>
              <PropRow $h={30}>
                <PropName>
                  <PropArrow />
                  <PropText>Horizontal Alig</PropText>
                  <Override />
                </PropName>
                <PropValue>
                  <AlignRow>
                    {[0, 1, 2, 3].map((i) => <AlignCell key={i} $on={i === 3}><AlignGlyph index={i} /></AlignCell>)}
                  </AlignRow>
                  <ResetArrow />
                </PropValue>
              </PropRow>
              <PropRow $h={37}>
                <PropName>
                  <PropArrow />
                  <PropText>Vertical Alignm</PropText>
                  <Override />
                </PropName>
                <PropValue>
                  <AlignRow>
                    {[4, 5, 6, 7].map((i) => <AlignCell key={i} $on={i === 5}><AlignGlyph index={i} /></AlignCell>)}
                  </AlignRow>
                  <ResetArrow />
                </PropValue>
              </PropRow>
            </Category>

            <Category>
              <CategoryHead><SolidArrow />Content</CategoryHead>
              <PropRow $h={28} $lift={2}>
                <PropName>
                  <PropArrow />
                  <PropText>Text</PropText>
                </PropName>
                <PropValue>
                  <ValueField $w={105} $h={20}>Button Text</ValueField>
                  <Slot $w={21}><Caret /></Slot>
                  <Icon w={14}>
                    <circle cx="7" cy="7" r="6" fill="#e8912a" />
                    <path d="M6 3h2v5H6zM6 9h2v2H6z" fill="#fff" />
                  </Icon>
                  <Slot $w={3} />
                  <ResetArrow />
                  <BindButton>Bind<Caret tone="#111" /></BindButton>
                </PropValue>
              </PropRow>
            </Category>

            <Category>
              <CategoryHead><SolidArrow />Appearance</CategoryHead>
              <PropRow $h={26}>
                <PropName>
                  <PropArrow><SolidArrow /></PropArrow>
                  <PropText>Color and Opac</PropText>
                  <Override />
                </PropName>
                <PropValue>
                  <Swatch $tone="#000" $w={89} $h={12} />
                  <Swatch $tone="#aaa" $w={14} $h={14} />
                  <InheritText>Inherit</InheritText>
                  <Slot $w={2} />
                  <ResetArrow />
                  <BindButton>Bind<Caret tone="#111" /></BindButton>
                </PropValue>
              </PropRow>
              {['R', 'G', 'B', 'A'].map((c) => (
                <PropRow $h={24} key={c}>
                  <PropName><PropText $indent={26}>{c}</PropText></PropName>
                  <PropValue>
                    <ValueField $w={109} $h={17}>{c === 'A' ? '1.0' : '0.0'}<Spinner /></ValueField>
                    <Slot $w={6} />
                    {c !== 'A' && <ResetArrow />}
                  </PropValue>
                </PropRow>
              ))}
              <PropRow $h={26}>
                <PropName>
                  <PropArrow><SolidArrow /></PropArrow>
                  <PropText>Font</PropText>
                </PropName>
                <PropValue>
                  <FontDrop $w={72}>Roboto<Caret tone="#ccc" /></FontDrop>
                  <FontDrop $w={71} $light>Bold<Caret tone="#111" /></FontDrop>
                  <Slot $w={4} />
                  <ValueField $w={36} $h={17}>24<Spinner /></ValueField>
                </PropValue>
              </PropRow>
              <PropRow $h={25}>
                <PropName>
                  <PropArrow />
                  <PropText>Font Materia</PropText>
                </PropName>
                <PropValue>
                  <FontDrop $w={125}>None<Caret tone="#ccc" /></FontDrop>
                  <Slot $w={8} />
                  <Icon w={12} h={10}><path d="M0 5l5-5v3h7v4H5v3z" fill="#ccc" /></Icon>
                  <Slot $w={10} />
                  <Icon w={12}><circle cx="6" cy="6" r="4.500" fill="none" stroke="#ccc" strokeWidth="1.500" /></Icon>
                </PropValue>
              </PropRow>
            </Category>
            <DetailsTrack />
            <DetailsThumb />
          </DetailsScroll>
        </PanelBody>
      </Dock>
    </MainArea>

    <BottomArea>
      <Dock>
        <TabStrip>
          <PanelTab>
            <Icon w={16} h={12}><path d="M1 10L11 3l4-2-2 5-9 5z" fill="#dfe4ec" /><path d="M1 11h6" stroke="#777" /></Icon>
            <TabTitle>Animations</TabTitle><CloseX>✕</CloseX>
          </PanelTab>
        </TabStrip>
        <PanelBody $pad="2px">
          <DarkPanel>
            <AnimationsTop>
              <AddAnimation>
                <Icon w={11}><path d="M4 0h3v4h4v3H7v4H4V7H0V4h4z" fill="#fff" /></Icon>
                Animation
              </AddAnimation>
              <SearchBox $h={18}>Search Anir<Magnifier /></SearchBox>
            </AnimationsTop>
            <AnimationRows>
              <AnimationRow>BoopySelect</AnimationRow>
              <AnimationRow>BecomeCancelled</AnimationRow>
            </AnimationRows>
          </DarkPanel>
        </PanelBody>
      </Dock>

      <Dock>
        <TabStrip>
          <PanelTab>
            <Icon w={16} h={12}><path d="M1 3h14v3H1zM0 7h11v3H0z" fill="#c8d4e8" /><path d="M5 1h2v10H5z" fill="#fff" /></Icon>
            <TabTitle>Timeline</TabTitle><CloseX>✕</CloseX>
          </PanelTab>
          <PanelTab $dim>
            <Icon w={14}><path d="M0 1h11v8H4v4H0z" fill="#c8d4e8" /><path d="M2 3l3 3-3 3z" fill="#3a62b8" /></Icon>
            <TabTitle>Compiler Results</TabTitle><CloseX>✕</CloseX>
          </PanelTab>
        </TabStrip>
        <TimelineBody>
          <LeftStub />
          <TimelineGrid>
            <TimelineTools>
              <Slot $w={24}>
                <Icon w={22} h={18}>
                  <path d="M1 6C6 0 16 0 21 6 16 12 6 12 1 6z" fill="#ccc" />
                  <circle cx="11" cy="6" r="3" fill="#444" />
                  <path d="M6 16h2M10 16h2M14 16h2" stroke="#ccc" strokeWidth="2" />
                </Icon>
              </Slot>
              <Slot $w={12}><Caret /></Slot>
              <Slot $w={14} />
              <Slot $w={20}><Icon w={12} h={14}><path d="M1 0l10 7-10 7z" fill="#ccc" /></Icon></Slot>
              <Slot $w={12}><Caret /></Slot>
              <Slot $w={14} />
              <Slot $w={20}>
                <Icon w={13}><rect x=".5" y=".5" width="12" height="12" fill="none" stroke="#ccc" strokeDasharray="2 1" /></Icon>
              </Slot>
              <Slot $w={14}><Caret /></Slot>
              <Slot $w={14}><Sep /></Slot>
              <Slot $w={26}>
                <Icon w={20}>
                  <path d="M10 0l4 4-4 4-4-4zM10 12l4 4-4 4-4-4zM4 6l4 4-4 4-4-4zM16 6l4 4-4 4-4-4z" fill="#ddd" />
                </Icon>
              </Slot>
              <Slot $w={12}><Caret /></Slot>
              <Slot $w={12}><Sep /></Slot>
              <SnapBox>
                <Icon w={18} h={20}>
                  <path d="M1 19V9a8 8 0 0 1 16 0v10h-5V9a3 3 0 0 0-6 0v10z" fill="#d8c4b8" />
                </Icon>
              </SnapBox>
              <Slot $w={30}><Caret /></Slot>
              <Slot $w={2}><Sep /></Slot>
              <Slot $w={26}>
                <Icon w={18}>
                  <circle cx="9" cy="9" r="7.500" fill="none" stroke="#aaa" strokeWidth="1.500" />
                  <path d="M9 4v5h4" fill="none" stroke="#aaa" strokeWidth="1.500" />
                </Icon>
              </Slot>
              <Slot $w={9} />
              <StepCombo>0.01s<Caret tone="#111" /></StepCombo>
              <Slot $w={12}><Sep /></Slot>
              <Slot $w={28}><PathGlyph /></Slot>
              <Slot $w={20}><Sep /></Slot>
              <Slot $w={24}>
                <Icon w={22} h={18}>
                  <circle cx="6" cy="4" r="3.500" fill="#ccc" /><circle cx="13" cy="4" r="3.500" fill="#ccc" />
                  <path d="M2 8h14v10H2zM16 11l6-3v9l-6-3z" fill="#ccc" />
                </Icon>
              </Slot>
              <Slot $w={15} />
              <Slot $w={24}>
                <Icon w={22}>
                  <circle cx="8" cy="9" r="7" fill="none" stroke="#ddd" strokeWidth="1.600" />
                  <circle cx="14" cy="13" r="7" fill="none" stroke="#ddd" strokeWidth="1.600" />
                </Icon>
              </Slot>
              <Slot $w={20}><Sep /></Slot>
              <Slot $w={20}>
                <Icon w={20} h={20}>
                  <path d="M2 6h10v8h-2v5H4v-5H2z" fill="#ccc" />
                  <circle cx="16" cy="4" r="4" fill="#ccc" />
                </Icon>
              </Slot>
              <Slot $w={18} />
              <Slot $w={24}>
                <Icon w={22} h={12}>
                  <path d="M0 6l5-4v8zM4 4h18v8H8z" fill="#ccc" />
                </Icon>
              </Slot>
            </TimelineTools>

            <OutlinerHead>
              <AddTrack>
                <Icon w={11}><path d="M4 0h3v4h4v3H7v4H4V7H0V4h4z" fill="#4a4a4a" /></Icon>
                Add
                <Caret tone="#4a4a4a" />
              </AddTrack>
              <SearchBox $h={18} $shade="#7c7c7c">
                <FilterHint>Filter</FilterHint>
                <Magnifier />
              </SearchBox>
            </OutlinerHead>
            <Track $band="#333" $shade="#262626">
              {Array.from({ length: 38 }, (_, i) => (
                <Tick key={i} $axis="x" $tone="#aaa" $len={i % 10 === 0 ? 8 : i % 5 === 0 ? 5 : 1} style={{ left: 82 + i * 16.7 }} />
              ))}
              {['0.00', '1.00', '2.00', '3.00'].map((t, i) => (
                <TrackTime key={t} $bottom={-1} style={{ left: 86 + i * 167 }}>{t}</TrackTime>
              ))}
              <TrackTime $top={6} $bright $size={12} style={{ left: 94 }}>0.00</TrackTime>
              <PlayheadCap $tip="down" $h={24} />
            </Track>

            <OutlinerGap />
            <Track $band="#3e3e3e" $shade="#2c2c2c">
              <PlayheadLine />
              {[1, 2, 3].map((i) => (
                <Tick key={i} $axis="x" $tone="#2c2c2c" $len={110} style={{ left: 82 + i * 167 }} />
              ))}
            </Track>

            <Transport>
              {TRANSPORT.map((t, i) => (
                <TransportItem key={i} $gap={t.gap}>
                  <Icon w={t.w} h={18}><path d={t.d} fill="#808080" fillRule="evenodd" /></Icon>
                </TransportItem>
              ))}
              <TransportItem $gap={8}>
                <Icon w={17} h={14}>
                  <path d="M2 8V3h10M15 6v5H5" fill="none" stroke="#808080" strokeWidth="1.800" />
                  <path d="M11 0l4 3-4 3zM6 8l-4 3 4 3z" fill="#808080" />
                </Icon>
              </TransportItem>
            </Transport>
            <Track $band="#333" $shade="#262626">
              {Array.from({ length: 38 }, (_, i) => (
                <Tick key={i} $axis="x" $tone="#aaa" $len={i % 10 === 0 ? 8 : i % 5 === 0 ? 5 : 1} style={{ left: 82 + i * 16.7, top: 1 }} />
              ))}
              {['0.00', '1.00', '2.00', '3.00'].map((t, i) => (
                <TrackTime key={t} $top={1} style={{ left: 86 + i * 167 }}>{t}</TrackTime>
              ))}
              <TrackTime $top={10} $bright $size={12} style={{ left: 94 }}>0.00</TrackTime>
              <PlayheadCap $tip="up" $h={31} />
            </Track>
          </TimelineGrid>
          <NoSelection>No Animation Selected</NoSelection>
        </TimelineBody>
      </Dock>
    </BottomArea>
  </Window>
);

export default App;
